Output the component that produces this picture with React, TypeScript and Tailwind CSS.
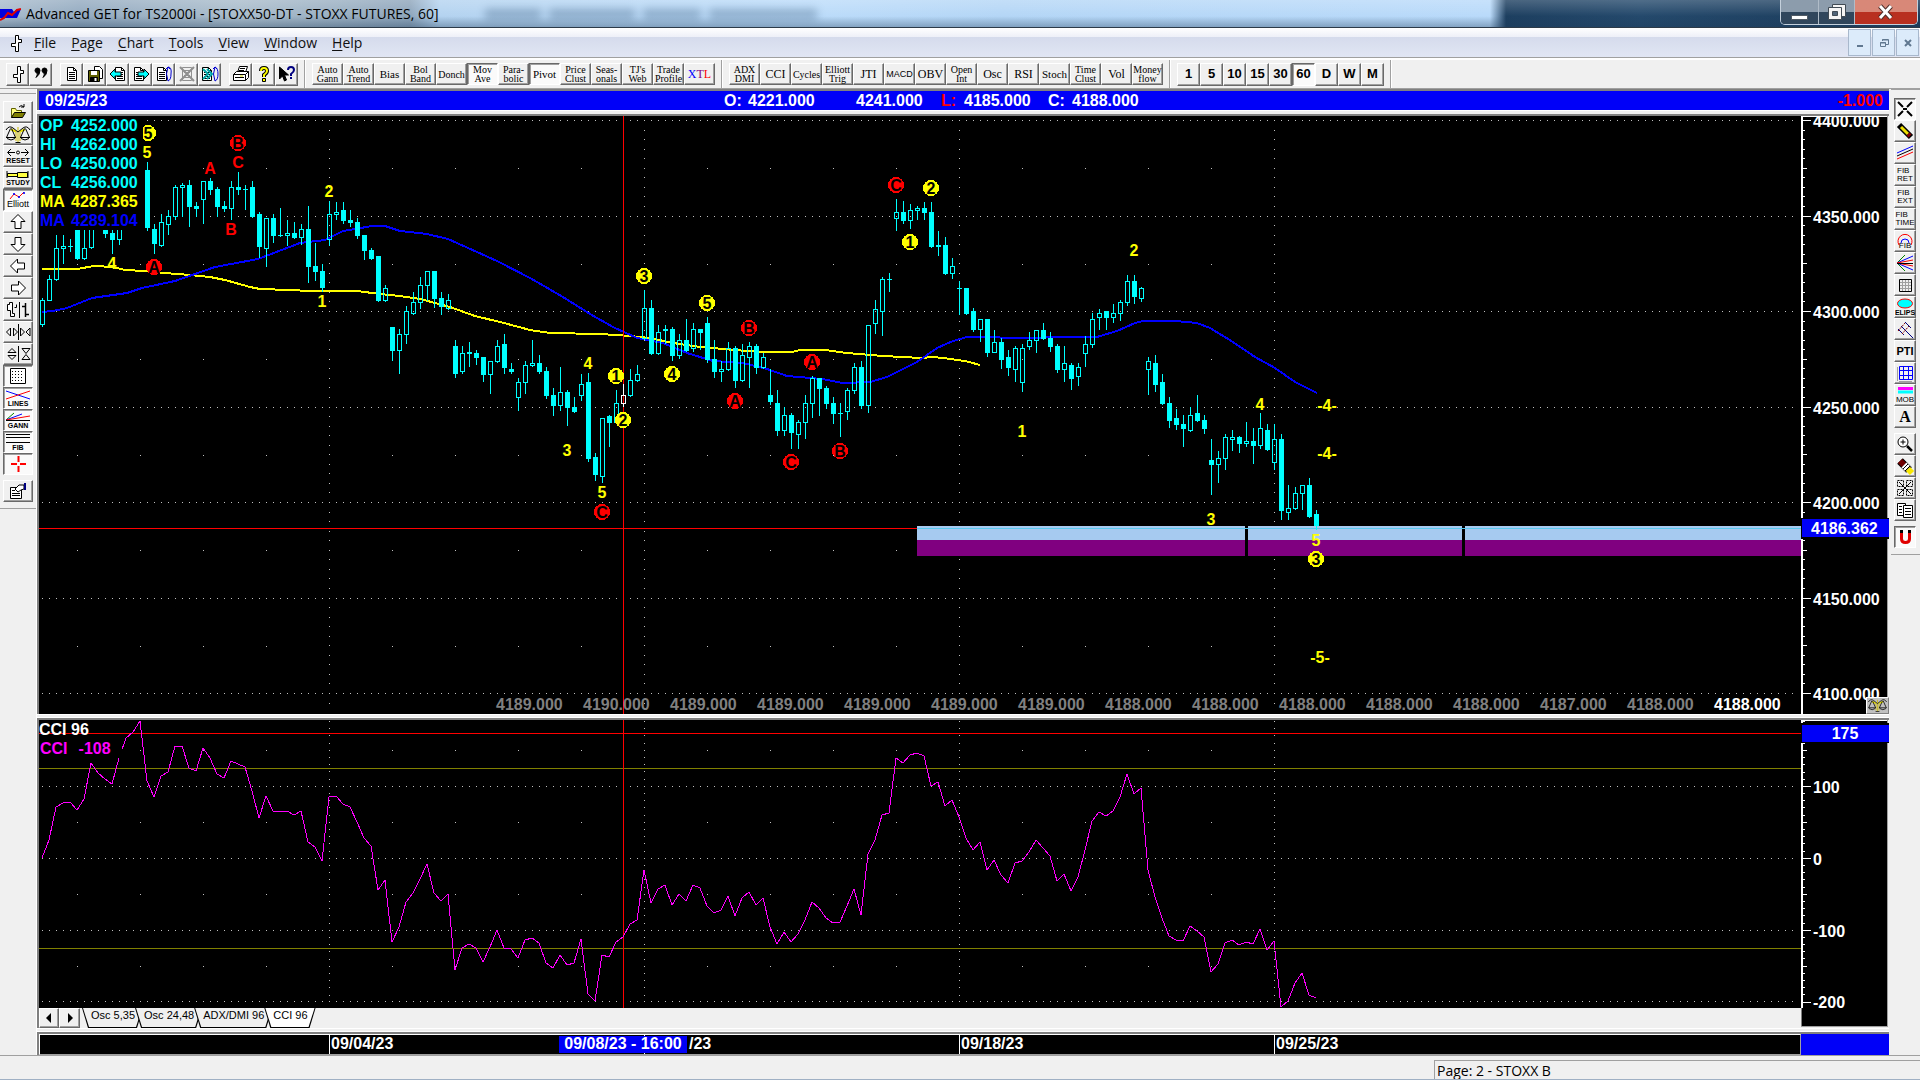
import { type ReactNode } from "react";
import clsx from "clsx";

// high, body top, body bottom, low, filled; one bar every 7px from x = 42
type Candle = [number, number, number, number, 0 | 1];

const FIRST_BAR = 42;
const BAR_STEP = 7;
const CURSOR_BAR = 83;

const CANDLES: Candle[] = [
  [298, 300, 325, 327, 0], [275, 279, 301, 301, 0], [235, 248, 280, 281, 0], [235, 246, 249, 264, 0],
  [239, 246, 246, 252, 0], [230, 230, 259, 260, 1], [230, 248, 259, 260, 0], [225, 225, 248, 249, 0],
  [210, 215, 225, 228, 1], [225, 225, 234, 238, 1], [230, 233, 240, 254, 1], [225, 225, 240, 245, 0],
  [200, 205, 215, 220, 0], [185, 190, 210, 215, 0], [165, 170, 190, 195, 0], [162, 170, 228, 231, 1],
  [224, 229, 244, 254, 1], [214, 222, 246, 247, 0], [210, 216, 225, 235, 0], [185, 187, 217, 220, 0],
  [183, 185, 188, 217, 0], [180, 185, 207, 227, 1], [202, 206, 209, 217, 1], [181, 181, 200, 224, 0],
  [178, 181, 190, 195, 1], [187, 189, 207, 217, 1], [201, 206, 209, 212, 1], [181, 187, 209, 220, 0],
  [172, 187, 190, 195, 1], [185, 189, 189, 210, 0], [181, 187, 217, 218, 1], [212, 214, 247, 258, 1],
  [218, 218, 249, 267, 0], [214, 218, 236, 243, 1], [208, 235, 235, 237, 0], [220, 233, 236, 246, 0],
  [222, 233, 238, 239, 1], [224, 229, 238, 245, 0], [206, 229, 267, 283, 1], [243, 266, 272, 281, 1],
  [264, 271, 288, 292, 1], [201, 214, 240, 246, 0], [202, 212, 215, 220, 0], [202, 210, 221, 224, 1],
  [210, 220, 223, 227, 1], [218, 222, 236, 239, 1], [235, 235, 251, 260, 1], [248, 250, 259, 260, 1],
  [256, 256, 301, 302, 1], [285, 288, 301, 302, 0], [327, 327, 351, 361, 1], [329, 334, 351, 374, 0],
  [306, 311, 335, 344, 0], [292, 302, 314, 315, 0], [277, 285, 303, 309, 0], [271, 271, 286, 301, 0],
  [271, 271, 299, 308, 1], [292, 298, 307, 315, 1], [294, 300, 309, 310, 0], [340, 346, 374, 378, 1],
  [346, 353, 372, 374, 0], [342, 352, 354, 367, 1], [350, 353, 358, 365, 1], [357, 357, 375, 382, 1],
  [361, 361, 375, 394, 0], [340, 346, 362, 363, 0], [334, 344, 368, 374, 1], [363, 369, 372, 374, 1],
  [378, 382, 398, 411, 0], [361, 365, 383, 394, 0], [340, 363, 366, 367, 0], [355, 363, 372, 374, 1],
  [367, 371, 396, 399, 1], [388, 395, 406, 416, 1], [367, 392, 406, 411, 0], [390, 392, 408, 426, 1],
  [397, 407, 412, 413, 1], [374, 384, 396, 401, 0], [373, 382, 459, 462, 1], [453, 457, 475, 481, 1],
  [418, 418, 477, 483, 0], [415, 416, 423, 447, 1], [390, 403, 423, 423, 0], [384, 395, 404, 407, 0],
  [369, 380, 396, 397, 0], [365, 374, 381, 382, 0], [290, 308, 339, 340, 0], [300, 308, 354, 355, 1],
  [325, 332, 354, 355, 0], [325, 329, 331, 344, 1], [327, 329, 356, 361, 1], [334, 340, 356, 359, 0],
  [319, 340, 351, 352, 1], [323, 329, 349, 352, 0], [329, 329, 333, 350, 1], [317, 323, 360, 363, 1],
  [340, 359, 372, 378, 1], [361, 369, 372, 382, 0], [342, 348, 370, 371, 0], [346, 348, 381, 388, 1],
  [344, 355, 381, 382, 0], [342, 346, 358, 388, 0], [344, 346, 368, 374, 1], [353, 357, 368, 369, 0],
  [369, 395, 402, 405, 1], [390, 403, 431, 436, 1], [407, 415, 431, 436, 0], [413, 415, 433, 449, 1],
  [420, 422, 435, 449, 0], [395, 403, 423, 439, 0], [376, 378, 404, 418, 0], [378, 378, 389, 416, 1],
  [386, 388, 404, 409, 1], [397, 403, 414, 424, 1], [403, 413, 413, 437, 0], [388, 390, 412, 420, 0],
  [363, 367, 391, 394, 0], [361, 367, 406, 409, 1], [325, 325, 406, 413, 0], [300, 309, 324, 334, 0],
  [277, 279, 312, 336, 0], [273, 279, 279, 292, 0], [199, 212, 219, 231, 0], [201, 212, 221, 224, 1],
  [204, 210, 221, 229, 0], [206, 208, 211, 220, 0], [202, 208, 213, 220, 1], [202, 212, 247, 248, 1],
  [231, 245, 247, 256, 1], [237, 245, 274, 275, 1], [258, 266, 274, 279, 0], [281, 288, 288, 315, 0],
  [288, 288, 314, 315, 1], [308, 311, 330, 332, 1], [319, 319, 330, 342, 0], [319, 319, 353, 357, 1],
  [330, 342, 353, 353, 0], [338, 342, 360, 369, 1], [350, 357, 368, 376, 1], [346, 348, 370, 382, 0],
  [344, 348, 383, 392, 0], [332, 340, 347, 350, 0], [330, 330, 341, 353, 0], [323, 330, 339, 340, 1],
  [332, 338, 347, 352, 1], [344, 346, 370, 373, 1], [346, 363, 370, 382, 0], [363, 365, 379, 390, 1],
  [363, 367, 377, 386, 0], [336, 344, 354, 367, 0], [313, 319, 345, 348, 0], [309, 313, 318, 330, 0],
  [311, 311, 318, 330, 1], [304, 313, 318, 323, 0], [300, 302, 314, 321, 0], [275, 281, 303, 306, 0],
  [275, 281, 297, 304, 1], [287, 288, 299, 302, 0], [357, 361, 370, 395, 0], [355, 363, 385, 392, 1],
  [374, 382, 404, 405, 1], [397, 403, 421, 428, 1], [409, 418, 425, 430, 1], [415, 424, 429, 447, 1],
  [407, 415, 431, 432, 0], [395, 413, 421, 422, 1], [415, 420, 429, 434, 1], [439, 460, 465, 495, 1],
  [451, 458, 465, 483, 0], [434, 437, 459, 470, 0], [430, 437, 440, 451, 0], [436, 437, 444, 453, 1],
  [422, 441, 444, 447, 0], [428, 441, 446, 464, 1], [413, 428, 446, 449, 0], [424, 430, 450, 451, 1],
  [424, 439, 463, 470, 0], [434, 439, 511, 520, 1], [485, 508, 513, 520, 0], [487, 493, 509, 510, 0],
  [485, 485, 494, 510, 0], [478, 485, 517, 518, 1], [510, 514, 526, 530, 1],
];

const CCI = [
  858, 840, 807, 803, 802, 810, 799, 763, 773, 779, 784, 758, 738, 732, 721, 781, 797, 776, 772, 746,
  746, 768, 771, 748, 758, 774, 778, 761, 764, 767, 791, 818, 796, 811, 811, 811, 815, 811, 842, 847,
  861, 797, 796, 804, 807, 822, 838, 846, 890, 880, 942, 927, 902, 893, 879, 864, 893, 901, 894, 970,
  948, 944, 948, 962, 947, 930, 948, 949, 958, 940, 938, 943, 963, 968, 955, 965, 963, 939, 994, 1001,
  955, 957, 942, 937, 924, 920, 870, 903, 889, 885, 905, 894, 901, 885, 888, 906, 913, 910, 896, 916,
  898, 892, 905, 898, 927, 944, 932, 942, 934, 920, 902, 908, 918, 923, 922, 906, 889, 915, 854, 840,
  815, 813, 758, 763, 755, 753, 756, 786, 782, 806, 800, 817, 838, 850, 842, 870, 860, 875, 883, 863,
  861, 852, 840, 848, 856, 881, 874, 891, 877, 850, 821, 812, 816, 811, 797, 774, 794, 788, 870, 897,
  918, 936, 940, 941, 926, 931, 937, 972, 964, 943, 940, 945, 942, 944, 929, 950, 941, 1007, 1001, 983,
  973, 995, 998,
];

const MA_YELLOW =
  "42,269 77,269 94,266 113,267 125,270 145,271 165,273 190,275 210,277 225,280 250,287 260,289 290,290 310,291 357,291 380,294 400,296 420,299 450,307 475,316 500,322 530,330 550,333 600,334 630,336 650,338 673,343 700,347 735,350 760,352 792,352 800,350 825,350 847,353 883,356 922,358 933,357 943,358 965,361 980,365";
const MA_BLUE =
  "42,312 53,311 67,308 92,298 127,293 142,288 175,281 215,267 258,259 300,243 325,240 343,231 355,229 372,226 385,226 400,231 427,234 448,239 477,252 497,261 530,278 563,297 590,314 613,327 637,338 663,343 687,353 713,361 743,363 767,369 787,376 822,379 843,383 870,382 887,377 917,362 937,348 953,341 967,337 993,337 1007,338 1040,338 1050,337 1070,337 1097,337 1117,331 1135,323 1143,321 1175,321 1197,323 1210,328 1233,342 1255,357 1275,368 1295,382 1317,393";

// text, centre x, centre y, colour, drawn on a disc
type Wave = [string, number, number, "y" | "r", 0 | 1];

const WAVES: Wave[] = [
  ["5", 148, 133, "y", 1], ["5", 147, 152, "y", 0], ["4", 112, 263, "y", 0], ["A", 154, 267, "r", 1],
  ["A", 210, 168, "r", 0], ["B", 238, 143, "r", 1], ["C", 238, 162, "r", 0], ["B", 231, 229, "r", 0],
  ["2", 329, 191, "y", 0], ["1", 322, 301, "y", 0], ["4", 588, 363, "y", 0], ["1", 616, 376, "y", 1],
  ["2", 623, 420, "y", 1], ["3", 567, 450, "y", 0], ["5", 602, 492, "y", 0], ["C", 602, 512, "r", 1],
  ["3", 644, 276, "y", 1], ["5", 707, 303, "y", 1], ["4", 672, 374, "y", 1], ["B", 749, 328, "r", 1],
  ["A", 735, 401, "r", 1], ["A", 812, 362, "r", 1], ["C", 791, 462, "r", 1], ["B", 840, 451, "r", 1],
  ["C", 896, 185, "r", 1], ["2", 931, 188, "y", 1], ["1", 910, 242, "y", 1], ["1", 1022, 431, "y", 0],
  ["2", 1134, 250, "y", 0], ["3", 1211, 519, "y", 0], ["4", 1260, 404, "y", 0], ["-4-", 1327, 405, "y", 0],
  ["-4-", 1327, 453, "y", 0], ["5", 1316, 540, "y", 0], ["3", 1316, 559, "y", 1], ["-5-", 1320, 657, "y", 0],
];

const PRICE_LEVELS: [string, number][] = [
  ["4400.000", 120], ["4350.000", 216], ["4300.000", 311], ["4250.000", 407],
  ["4200.000", 502], ["4150.000", 598], ["4100.000", 693],
];
const CCI_LEVELS: [string, number][] = [["100", 786], ["0", 858], ["-100", 930], ["-200", 1001]];

const DAY_LINES = [329, 644, 959, 1274];
const HALF_MARKS = [
  77, 140, 203, 266, 392, 455, 518, 581, 707, 770, 833, 896, 1022, 1085, 1148, 1211,
];

const LAST_PRICES = [
  "4189.000", "4190.000", "4189.000", "4189.000", "4189.000", "4189.000", "4189.000", "4188.000",
  "4188.000", "4188.000", "4188.000", "4188.000", "4187.000", "4188.000", "4188.000",
];

const barX = (i: number) => FIRST_BAR + i * BAR_STEP;

function steps(from: number, to: number, step: number) {
  const out: number[] = [];
  for (let v = from; v < to; v += step) out.push(Math.round(v));
  return out;
}

function Grid({ levels, halves, dots }: { levels: number[]; halves: number[]; dots: number[] }) {
  return (
    <g>
      {levels.map((y) => (
        <line key={y} x1={FIRST_BAR} x2={1793} y1={y + 0.5} y2={y + 0.5} stroke="#c0c0c0" strokeDasharray="1 6" />
      ))}
      {DAY_LINES.map((x) =>
        dots.map((y) => <rect key={`${x}-${y}`} x={x} y={y} width="1" height="1" fill="#c0c0c0" />),
      )}
      {HALF_MARKS.map((x) =>
        halves.map((y) => <rect key={`${x}-${y}`} x={x} y={y} width="1" height="1" fill="#c0c0c0" />),
      )}
    </g>
  );
}

function CandleBar({ index, candle }: { index: number; candle: Candle }) {
  const [high, top, bottom, low, filled] = candle;
  const x = barX(index);
  const color = index === CURSOR_BAR ? "#ffffff" : "#00ffff";
  if (top === bottom) {
    return (
      <g fill={color}>
        <rect x={x} y={high} width="1" height={low - high} />
        <rect x={x - 2} y={top} width="5" height="1" />
      </g>
    );
  }
  return (
    <g fill={color}>
      <rect x={x} y={high} width="1" height={Math.max(top - high, 0)} />
      <rect x={x} y={bottom} width="1" height={Math.max(low - bottom, 0)} />
      {filled ? (
        <rect x={x - 2} y={top} width="5" height={bottom - top} />
      ) : (
        <rect x={x - 1.5} y={top + 0.5} width="4" height={bottom - top - 1} fill="none" stroke={color} />
      )}
    </g>
  );
}

function WaveLabel({ wave }: { wave: Wave }) {
  const [text, x, y, tone, disc] = wave;
  const color = tone === "y" ? "#ffff00" : "#ff0000";
  return (
    <g>
      {disc ? <circle cx={x} cy={y} r="8" fill={color} shapeRendering="crispEdges" /> : null}
      <text x={x} y={y + 6} textAnchor="middle" fill={disc ? "#000000" : color}>
        {text}
      </text>
    </g>
  );
}

function PriceChart() {
  return (
    <div className="relative h-[598px] min-w-0 flex-1 overflow-hidden bg-black">
      <svg className="block size-full text-[16px] font-bold" role="img" aria-label="STOXX futures, 60 minute candles">
        <g transform="translate(-39 -116)">
          <g shapeRendering="crispEdges">
            <Grid
              levels={PRICE_LEVELS.map(([, y]) => y)}
              halves={[168, 264, 359, 455, 550, 646]}
              dots={steps(120, 712, 9.55)}
            />
            <rect x="917" y="526" width="1600" height="14" fill="#a6caf0" />
            <rect x="917" y="540" width="1600" height="16" fill="#800080" />
            <rect x="1245" y="526" width="3" height="30" fill="#000" />
            <rect x="1462" y="526" width="3" height="30" fill="#000" />
            <rect x="39" y="528" width="878" height="1" fill="#ff0000" />
            <rect x="917" y="528" width="1600" height="1" fill="#59c8f0" />
            <polyline points={MA_YELLOW} fill="none" stroke="#ffff00" strokeWidth="2" />
            <polyline points={MA_BLUE} fill="none" stroke="#0000ff" strokeWidth="2" />
            <rect x={barX(CURSOR_BAR)} y="116" width="1" height="600" fill="#ff0000" />
            {CANDLES.map((candle, i) => (
              <CandleBar key={i} index={i} candle={candle} />
            ))}
          </g>
          {WAVES.map((wave, i) => (
            <WaveLabel key={i} wave={wave} />
          ))}
        </g>
      </svg>
      <Readout />
      <div className="absolute right-[20px] bottom-0 flex gap-5 text-[16px] leading-[19px] font-bold text-[#808080]">
        {LAST_PRICES.map((price, i) => (
          <span key={i} className={clsx("w-[67px]", i === LAST_PRICES.length - 1 && "text-white")}>
            {price}
          </span>
        ))}
      </div>
    </div>
  );
}

const READOUT = [
  { label: "OP", value: "4252.000", tone: "text-[#00ffff]" },
  { label: "HI", value: "4262.000", tone: "text-[#00ffff]" },
  { label: "LO", value: "4250.000", tone: "text-[#00ffff]" },
  { label: "CL", value: "4256.000", tone: "text-[#00ffff]" },
  { label: "MA", value: "4287.365", tone: "text-[#ffff00]" },
  { label: "MA", value: "4289.104", tone: "text-[#0000ff]" },
];

function Readout() {
  return (
    <dl className="absolute top-0 left-0 w-[104px] bg-black pl-px text-[16px] leading-[19px] font-bold">
      {READOUT.map((row, i) => (
        <div key={i} className={clsx("flex", row.tone)}>
          <dt className="w-[31px]">{row.label}</dt>
          <dd>{row.value}</dd>
        </div>
      ))}
    </dl>
  );
}

function CciChart() {
  const points = CCI.map((y, i) => `${barX(i)},${y}`).join(" ");
  return (
    <div className="relative h-[288px] overflow-hidden bg-black">
      <svg className="block size-full" role="img" aria-label="CCI 96">
        <g transform="translate(-39 -720)" shapeRendering="crispEdges">
          <Grid levels={CCI_LEVELS.map(([, y]) => y)} halves={[750, 822, 894, 966]} dots={steps(721, 1000, 7.2)} />
          <rect x="39" y="733" width="3000" height="1" fill="#ff0000" />
          <rect x="39" y="768" width="3000" height="1" fill="#808000" />
          <rect x="39" y="948" width="3000" height="1" fill="#808000" />
          <rect x={barX(CURSOR_BAR)} y="720" width="1" height="290" fill="#ff0000" />
          <polyline points={points} fill="none" stroke="#ff00ff" />
        </g>
      </svg>
      <div className="absolute top-0 left-0 text-[16px] leading-[19px] font-bold">
        <p className="text-white">CCI 96</p>
        <p className="flex w-[83px] gap-[11px] bg-black pl-px text-[#ff00ff]">
          <span>CCI</span>
          <span>-108</span>
        </p>
      </div>
    </div>
  );
}

function PriceAxis() {
  return (
    <div className="relative h-[598px] w-[88px] shrink-0 overflow-hidden bg-black">
      <svg className="block size-full text-[16px] font-bold" aria-label="Price scale">
        <g transform="translate(-1801 -116)" fill="#ffffff">
          <g shapeRendering="crispEdges">
            <rect x="1801" y="116" width="2" height="598" />
            <rect x="1801" y="116" width="86" height="1" />
            <rect x="1887" y="116" width="1" height="598" fill="#a0a0a0" />
            <rect x="1888" y="116" width="1" height="598" fill="#f0f0f0" />
            {steps(120, 700, 9.55).map((y, i) => (
              <rect key={y} x="1803" y={y} width={i % 10 === 0 ? 8 : i % 5 === 0 ? 4 : 2} height="1" />
            ))}
          </g>
          {PRICE_LEVELS.map(([label, y]) => (
            <text key={label} x="1813" y={y + 7}>
              {label}
            </text>
          ))}
          <rect x="1801" y="518" width="88" height="21" fill="#000" />
          <rect x="1802" y="519" width="87" height="18" fill="#0000f8" />
          <text x="1811" y="534">
            4186.362
          </text>
        </g>
      </svg>
      <button
        type="button"
        aria-label="Scale"
        className="absolute right-0 bottom-0 flex h-[17px] w-[23px] items-center justify-center border border-white border-r-[#808080] border-b-[#808080] bg-[#c0c0c0]"
      >
        <ScalesIcon small />
      </button>
    </div>
  );
}

function CciAxis() {
  return (
    <div className="h-[308px] w-[88px] shrink-0 bg-[#f0f0f0]">
      <svg className="block size-full text-[16px] font-bold" aria-label="CCI scale">
        <g transform="translate(-1801 -720)" fill="#ffffff">
          <g shapeRendering="crispEdges">
            <rect x="1801" y="720" width="87" height="306" fill="#000" />
            <rect x="1801" y="720" width="2" height="288" />
            <rect x="1803" y="720" width="84" height="1" />
            <rect x="1801" y="1008" width="1" height="18" fill="#808080" />
            <rect x="1887" y="720" width="1" height="306" fill="#a0a0a0" />
            <rect x="1801" y="1026" width="87" height="1" fill="#a0a0a0" />
            {steps(714, 1004, 7.19).map((y, i) => (
              <rect key={y} x="1803" y={y} width={i % 10 === 0 ? 8 : i % 5 === 0 ? 4 : 2} height="1" />
            ))}
          </g>
          {CCI_LEVELS.map(([label, y]) => (
            <text key={label} x="1813" y={y + 7}>
              {label}
            </text>
          ))}
          <rect x="1801" y="723" width="88" height="20" fill="#000" />
          <rect x="1802" y="725" width="87" height="17" fill="#0000f8" />
          <text x="1845" y="739" textAnchor="middle">
            175
          </text>
        </g>
      </svg>
    </div>
  );
}

// the cursor's time box covers the start of the second date
const DATE_LABELS: [string, number][] = [
  ["09/04/23", 331], ["/23", 689], ["09/18/23", 961], ["09/25/23", 1276],
];

function DateAxis() {
  return (
    <div className="flex h-[21px]">
      <div className="min-w-0 flex-1 border border-white border-b-[#a0a0a0] border-r-[#a0a0a0] bg-black">
        <svg className="block size-full text-[16px] font-bold" aria-label="Dates">
          <g transform="translate(-40 0)" fill="#ffffff">
            {DAY_LINES.map((x) => (
              <rect key={x} x={x} y="0" width="1" height="20" shapeRendering="crispEdges" />
            ))}
            {DATE_LABELS.map(([date, x]) => (
              <text key={date} x={x} y="14">
                {date}
              </text>
            ))}
            <rect x="559" y="1" width="128" height="17" fill="#0000f8" />
            <text x="623" y="14" textAnchor="middle">
              09/08/23 - 16:00
            </text>
          </g>
        </svg>
      </div>
      <div className="w-[88px] shrink-0 bg-[#0000f8]" />
    </div>
  );
}

function ToolButton({
  label,
  pressed,
  className,
  children,
}: {
  label: string;
  pressed?: boolean;
  className?: string;
  children: ReactNode;
}) {
  return (
    <button
      type="button"
      aria-label={label}
      aria-pressed={pressed}
      className={clsx(
        "flex shrink-0 flex-col items-center justify-center overflow-hidden border",
        pressed
          ? "border-t-[#696969] border-r-white border-b-white border-l-[#696969] bg-[#fafafa] shadow-[inset_1px_1px_0_#a0a0a0]"
          : "border-t-white border-r-[#696969] border-b-[#696969] border-l-white bg-[#f0f0f0] shadow-[inset_-1px_-1px_0_#a0a0a0]",
        className,
      )}
    >
      {children}
    </button>
  );
}

function Icon({ w = 20, h = 20, children }: { w?: number; h?: number; children: ReactNode }) {
  return (
    <svg
      width={w}
      height={h}
      viewBox={`0 0 ${w} ${h}`}
      fill="none"
      stroke="#000"
      className="block shrink-0"
      aria-hidden="true"
    >
      {children}
    </svg>
  );
}

function ScalesIcon({ small }: { small?: boolean }) {
  return (
    <svg
      width={small ? 21 : 26}
      height={small ? 13 : 17}
      viewBox="0 0 26 17"
      fill="none"
      stroke="#000"
      aria-hidden="true"
      className="block"
    >
      <path d="M13 1v15M11 5v10M15 5v10" stroke="#c8b800" />
      <path d="M6 3.500l5 2M20 3.500l-5 2" stroke="#e8e000" strokeWidth="2" />
      <path d="M10.500 16.500h5M1 4q3-5 7-2l5 4 5-4q4-3 7 2" />
      <path d="M5.500 2.500L1.500 11.500M6.500 2.500l4 9M19.500 2.500l-4 9M20.500 2.500l4 9M1 11.500h10M15 11.500h10" />
      <path d="M2 12.500q4 3 8 0M16 12.500q4 3 8 0" />
    </svg>
  );
}

function CrossBarIcon() {
  return (
    <Icon>
      <path d="M9.500 2.500h3v4h3v3h-3v9h-3v-5h-4v-3h4z" fill="#fff" />
    </Icon>
  );
}

function PageShape({ x = 5 }: { x?: number }) {
  return (
    <g transform={`translate(${x} 0)`}>
      <path d="M.5 3.500h6l3 3v10h-9z" fill="#fff" />
      <path d="M6.500 3.500v3h3M2 8.500h6M2 10.500h6M2 12.500h6M2 14.500h6" />
    </g>
  );
}

const MAIN_TOOLS: { label: string; icon: ReactNode; gap?: boolean }[] = [
  { label: "Open chart", icon: <CrossBarIcon /> },
  {
    label: "Quote",
    icon: (
      <Icon>
        <path
          d="M4 6.500a2.500 2.500 0 1 1 5 0q0 4-4 7q2-3 1-4.500q-2-.5-2-2.500zM11 6.500a2.500 2.500 0 1 1 5 0q0 4-4 7q2-3 1-4.500q-2-.5-2-2.500z"
          fill="#000"
        />
      </Icon>
    ),
  },
  { label: "New page", gap: true, icon: <Icon><PageShape /></Icon> },
  {
    label: "Save page",
    icon: (
      <Icon>
        <path d="M9.500 2.500h5l3 3v9h-8z" fill="#fff" />
        <path d="M3.500 6.500h11v11h-11z" fill="#606000" />
        <path d="M6 7h6v4H6z" fill="#fff" stroke="none" />
        <path d="M5.500 13.500h7v4h-7z" fill="#000" />
        <path d="M10.500 14v3" stroke="#fff" strokeWidth="2" />
      </Icon>
    ),
  },
  {
    label: "Previous page",
    icon: (
      <Icon>
        <PageShape x={7} />
        <path d="M2 10l5-5v3h6v4H7v3z" fill="#00ffff" />
      </Icon>
    ),
  },
  {
    label: "Next page",
    icon: (
      <Icon>
        <PageShape x={3} />
        <path d="M18 10l-5-5v3H7v4h6v3z" fill="#00ffff" />
      </Icon>
    ),
  },
  {
    label: "Page forward",
    icon: (
      <Icon>
        <PageShape x={3} />
        <path d="M14 3q-3 7 0 14M14 3q4 0 3 7q0 6-3 7M12 5l2-2 2 2" stroke="#0000d0" />
      </Icon>
    ),
  },
  {
    label: "Delete page",
    icon: (
      <Icon>
        <g stroke="#909090">
          <path d="M5.500 3.500h9v13h-9zM7 6.500h6M7 8.500h6M7 11.500h6M7 13.500h6" />
          <path d="M3 3l14 14M17 3L3 17" strokeWidth="2" />
        </g>
      </Icon>
    ),
  },
  {
    label: "Cycle pages",
    icon: (
      <Icon>
        <PageShape x={2} />
        <path d="M3 5l5 5-5 5M7 5l5 5-5 5" stroke="#00a8a8" strokeWidth="2" />
        <path d="M15 3q-3 7 0 14M15 3q3 1 3 7q0 6-3 7M13 5l2-2 2 2" stroke="#0000d0" />
      </Icon>
    ),
  },
  {
    label: "Print",
    gap: true,
    icon: (
      <Icon>
        <path d="M6.500 8.500l2-6h8l-2 6z" fill="#fff" />
        <path d="M2.500 10.500l3-3h12v6l-3 3h-12z" fill="#fff" />
        <path d="M2.500 10.500h12v6M14.500 10.500l3-3M9 4.500h5M8 6.500h5M4 13.500h9" />
        <path d="M9 12h3" stroke="#d8d800" />
      </Icon>
    ),
  },
  {
    label: "Help",
    icon: (
      <Icon>
        <path d="M7 7q0-3 3-3t3 3q0 2-3 4v2" strokeWidth="4" />
        <path d="M7 7q0-3 3-3t3 3q0 2-3 4v2" stroke="#ffff00" strokeWidth="2" />
        <path d="M8.500 14.500h3v3h-3z" fill="#ffff00" />
      </Icon>
    ),
  },
  {
    label: "Context help",
    icon: (
      <Icon>
        <path d="M2.500 3v12l3-3 2 5 2-1-2-5h4z" fill="#000" />
        <path d="M11 6q0-3 3-3t3 3q0 2-3 4v2M14 13v2" stroke="#000080" strokeWidth="2" />
      </Icon>
    ),
  },
];

type TextTool = { lines: string[]; pressed?: boolean; size?: "sm" | "md" | "lg" };

const STUDY_TOOLS: TextTool[] = [
  { lines: ["Auto", "Gann"] },
  { lines: ["Auto", "Trend"] },
  { lines: ["Bias"], size: "md" },
  { lines: ["Bol", "Band"] },
  { lines: ["Donch"] },
  { lines: ["Mov", "Ave"], pressed: true },
  { lines: ["Para-", "bolic"] },
  { lines: ["Pivot"], pressed: true, size: "md" },
  { lines: ["Price", "Clust"] },
  { lines: ["Seas-", "onals"] },
  { lines: ["TJ's", "Web"] },
  { lines: ["Trade", "Profile"] },
  { lines: ["XTL"], size: "lg" },
];

const OSC_TOOLS: TextTool[] = [
  { lines: ["ADX", "DMI"] },
  { lines: ["CCI"], size: "lg" },
  { lines: ["Cycles"] },
  { lines: ["Elliott", "Trig"] },
  { lines: ["JTI"], size: "lg" },
  { lines: ["MACD"] },
  { lines: ["OBV"], size: "lg" },
  { lines: ["Open", "Int"] },
  { lines: ["Osc"], size: "lg" },
  { lines: ["RSI"], size: "lg" },
  { lines: ["Stoch"], size: "md" },
  { lines: ["Time", "Clust"] },
  { lines: ["Vol"], size: "lg" },
  { lines: ["Money", "flow"] },
];

const INTERVALS = ["1", "5", "10", "15", "30", "60", "D", "W", "M"];

const TEXT_TOOL_SIZES = {
  sm: "text-[10px] leading-[9px]",
  md: "text-[11px] leading-[12px]",
  lg: "text-[12px] leading-[14px]",
};

function TextToolButton({ tool }: { tool: TextTool }) {
  const text = tool.lines.join(" ");
  return (
    <ToolButton
      label={text}
      pressed={tool.pressed}
      className={clsx(
        "h-[22px] w-[31px] font-['Liberation_Serif',serif] whitespace-nowrap",
        TEXT_TOOL_SIZES[tool.size ?? "sm"],
      )}
    >
      {text === "XTL" ? (
        <span>
          <span className="text-[#0000ff]">X</span>
          <span className="text-[#800080]">T</span>
          <span className="text-[#ff0000]">L</span>
        </span>
      ) : text === "MACD" ? (
        <span className="font-['Liberation_Sans',sans-serif] text-[9px]">MACD</span>
      ) : (
        tool.lines.map((line) => <span key={line}>{line}</span>)
      )}
    </ToolButton>
  );
}

function ToolbarDivider() {
  return <div className="mx-[6px] h-full w-[2px] shrink-0 border-l border-[#a0a0a0] bg-white" />;
}

function Toolbar() {
  return (
    <div className="flex h-[29px] items-center border-t border-white pl-[6px]">
      {MAIN_TOOLS.map((tool) => (
        <ToolButton key={tool.label} label={tool.label} className={clsx("h-[23px] w-[23px]", tool.gap && "ml-2")}>
          {tool.icon}
        </ToolButton>
      ))}
      <ToolbarDivider />
      {STUDY_TOOLS.map((tool) => (
        <TextToolButton key={tool.lines.join(" ")} tool={tool} />
      ))}
      <ToolbarDivider />
      {OSC_TOOLS.map((tool) => (
        <TextToolButton key={tool.lines.join(" ")} tool={tool} />
      ))}
      <ToolbarDivider />
      {INTERVALS.map((interval) => (
        <ToolButton
          key={interval}
          label={interval}
          pressed={interval === "60"}
          className="h-[23px] w-[23px] text-[13px] leading-[16px] font-bold"
        >
          {interval}
        </ToolButton>
      ))}
      <ToolbarDivider />
    </div>
  );
}

function TinyLabel({ children }: { children: ReactNode }) {
  return <span className="text-[7px] leading-[7px] font-bold">{children}</span>;
}

const LEFT_TOOLS: { label: string; pressed?: boolean; gap?: boolean; icon: ReactNode }[] = [
  {
    label: "Open",
    icon: (
      <Icon>
        <path d="M3.500 15.500v-9h4l1 2h5v2" fill="#ffff80" stroke="#606000" />
        <path d="M3.500 15.500l3-5h11l-3 5z" fill="#808000" />
        <path d="M11 5q2-3 5 0M16 2v3h-3" />
      </Icon>
    ),
  },
  { label: "Scale", icon: <ScalesIcon /> },
  {
    label: "Reset",
    icon: (
      <>
        <Icon w={24} h={9}>
          <path d="M5 1L1.500 4.500 5 8M2 4.500h7M19 1l3.500 3.500L19 8M22 4.500h-7" />
          <circle cx="12" cy="4.500" r="1.500" />
        </Icon>
        <TinyLabel>RESET</TinyLabel>
      </>
    ),
  },
  {
    label: "Study",
    icon: (
      <>
        <Icon w={24} h={9}>
          <path d="M1.500 3.500h10v3h-10zM11.500 2.500h10v5h-10z" fill="#ffff40" />
          <path d="M1 1v7M22 1v7" />
        </Icon>
        <TinyLabel>STUDY</TinyLabel>
      </>
    ),
  },
  {
    label: "Elliott",
    pressed: true,
    icon: (
      <>
        <Icon w={24} h={9}>
          <path d="M4 8l4-5 5 3 5-5" stroke="#ff0000" />
          <path d="M7.500 2.500h1v1h-1zM12.500 5.500h1v1h-1zM17.500 1.500h1v1h-1z" fill="#0000ff" stroke="#0000ff" />
        </Icon>
        <span className="text-[9px] leading-[9px]">Elliott</span>
      </>
    ),
  },
  { label: "Up", icon: <Icon><path d="M10 2.500l7 7h-4v7H7v-7H3z" fill="#fff" /></Icon> },
  { label: "Down", icon: <Icon><path d="M10 17.500l7-7h-4v-7H7v7H3z" fill="#fff" /></Icon> },
  { label: "Left", icon: <Icon><path d="M2.500 10l7-7v4h7v6h-7v4z" fill="#fff" /></Icon> },
  { label: "Right", icon: <Icon><path d="M17.500 10l-7-7v4h-7v6h7v4z" fill="#fff" /></Icon> },
  {
    label: "Bar width",
    icon: (
      <Icon w={26}>
        <path d="M2.500 4.500h2v-2h3v11h2v3h-4v-6h-3zM9.500 7.500h2v-3M14.500 2v16" fill="#fff" />
        <path d="M20.500 3v14M17 6.500h3M21 14.500h3" strokeWidth="1.500" />
      </Icon>
    ),
  },
  {
    label: "Spread",
    icon: (
      <Icon w={26}>
        <path d="M5.500 6v8l-4-4zM8.500 6v8l4-4z" />
        <path d="M13.500 2v16" />
        <path d="M15.500 6v8l4-4zM25 6v8l-4-4z" />
      </Icon>
    ),
  },
  {
    label: "Stretch",
    icon: (
      <Icon w={26}>
        <path d="M3 8.500h8l-4-4zM3 11.500h8l-4 4z" />
        <path d="M13.500 2v16" />
        <path d="M17 4.500h8l-4 5zM17 15.500h8l-4-5z" />
      </Icon>
    ),
  },
  {
    label: "Grid",
    pressed: true,
    icon: (
      <Icon>
        <path d="M2.500 2.500h15v15h-15z" fill="#fff" />
        <path d="M4 5.500h12M4 8.500h12M4 11.500h12M4 14.500h12" strokeDasharray="1 2" />
      </Icon>
    ),
  },
  {
    label: "Lines",
    pressed: true,
    icon: (
      <>
        <Icon w={26} h={10}>
          <path d="M1 1l24 8" stroke="#0000ff" />
          <path d="M1 9l24-8" stroke="#ff0000" />
        </Icon>
        <TinyLabel>LINES</TinyLabel>
      </>
    ),
  },
  {
    label: "Gann",
    pressed: true,
    icon: (
      <>
        <Icon w={26} h={10}>
          <path d="M1 8l8-7" stroke="#008000" />
          <path d="M1 8l16-6" stroke="#0000ff" />
          <path d="M1 8l24-4" stroke="#ff0000" />
          <path d="M1 8.500h24" />
        </Icon>
        <TinyLabel>GANN</TinyLabel>
      </>
    ),
  },
  {
    label: "Fibonacci",
    pressed: true,
    icon: (
      <>
        <Icon w={26} h={11}>
          <path d="M1 1.500h24M1 4.500h24M1 9.500h24" />
        </Icon>
        <TinyLabel>FIB</TinyLabel>
      </>
    ),
  },
  {
    label: "Crosshair",
    pressed: true,
    icon: <Icon><path d="M3 10h6M12 10h6M10.500 2v6M10.500 12v6" stroke="#ff0000" strokeWidth="2" /></Icon>,
  },
  {
    label: "Properties",
    gap: true,
    icon: (
      <Icon>
        <path d="M2.500 6.500h11v11h-11z" fill="#fff" />
        <path d="M4 9.500h3M4 12.500h8M4 14.500h8M7 8l4-4h5v4l-3 1-3 2z" fill="#fff" />
        <path d="M17 2v7" stroke="#000080" strokeWidth="2" />
      </Icon>
    ),
  },
];

function FibText({ second }: { second: string }) {
  return (
    <span className="flex flex-col items-start text-[8px] leading-[8px]">
      <span>FIB</span>
      <span>{second}</span>
    </span>
  );
}

const RIGHT_TOOLS: { label: string; pressed?: boolean; gap?: boolean; icon: ReactNode }[] = [
  {
    label: "Pointer",
    pressed: true,
    icon: <Icon><path d="M3 3l5 5M17 3l-5 5M3 17l5-5M17 17l-5-5M8 10h4" strokeWidth="2" /></Icon>,
  },
  {
    label: "Pencil",
    icon: (
      <Icon>
        <path d="M4 4l12 12" strokeWidth="6" />
        <path d="M6 6l7 7" stroke="#f0e000" strokeWidth="3" />
        <path d="M13 13l2 2" stroke="#800000" strokeWidth="4" />
      </Icon>
    ),
  },
  {
    label: "Channel",
    icon: (
      <Icon>
        <path d="M2 10l16-7" stroke="#0000ff" />
        <path d="M2 13l16-7" />
        <path d="M2 16l16-7" stroke="#ff0000" />
      </Icon>
    ),
  },
  { label: "Fibonacci retracement", icon: <FibText second="RET" /> },
  { label: "Fibonacci extension", icon: <FibText second="EXT" /> },
  { label: "Fibonacci time", icon: <FibText second="TIME" /> },
  {
    label: "Fibonacci arcs",
    icon: (
      <Icon>
        <path d="M4 14a7 7 0 1 1 12 0" stroke="#ff0000" />
        <path d="M6 12a4 4 0 1 1 8 0" stroke="#0000ff" />
        <text x="10" y="17" textAnchor="middle" fill="#000" stroke="none" fontSize="8">
          FIB
        </text>
      </Icon>
    ),
  },
  {
    label: "Gann fan",
    icon: (
      <Icon>
        <path d="M2 10l8-8M2 10l8 8" stroke="#008000" />
        <path d="M2 10l16-7M2 10l16 7" stroke="#0000ff" />
        <path d="M2 10l16-3M2 10l16 3" stroke="#ff0000" />
        <path d="M2 10.500h16" />
      </Icon>
    ),
  },
  {
    label: "Gann box",
    icon: (
      <Icon>
        <path d="M4.500 4.500h12v12h-12z" />
        <path d="M7.500 5v11M10.500 5v11M13.500 5v11M5 7.500h11M5 10.500h11M5 13.500h11" stroke="#a0a0a0" />
      </Icon>
    ),
  },
  {
    label: "Ellipse",
    icon: (
      <>
        <Icon h={11}>
          <ellipse cx="10" cy="5.500" rx="7.500" ry="4.500" fill="#00ffff" stroke="#ff0000" />
        </Icon>
        <TinyLabel>ELIPS</TinyLabel>
      </>
    ),
  },
  {
    label: "Pitchfork",
    icon: (
      <Icon>
        <path d="M3 10l6 6M6 7l12 12M10 3l6 6" stroke="#000080" />
        <path d="M3 12l7-8M7 15l7-8" stroke="#800000" strokeDasharray="2 1" />
      </Icon>
    ),
  },
  { label: "PTI", icon: <span className="text-[11px] leading-[12px] font-bold">PTI</span> },
  {
    label: "Square grid",
    icon: (
      <Icon>
        <path d="M4.500 3.500h13v13h-13zM8.500 3.500v13M13.500 3.500v13M4.500 7.500h13M4.500 12.500h13" stroke="#0000ff" />
        <path d="M2.500 4v14M4 18.500h13" stroke="#a0a0a0" />
      </Icon>
    ),
  },
  {
    label: "Make or break",
    icon: (
      <>
        <Icon h={9}>
          <path d="M3 2.500h15" stroke="#ff00ff" strokeWidth="3" />
          <path d="M3 6h15" stroke="#00ffff" strokeWidth="3" />
        </Icon>
        <span className="text-[8px] leading-[9px]">MOB</span>
      </>
    ),
  },
  {
    label: "Text",
    icon: <span className="font-['Liberation_Serif',serif] text-[16px] leading-[16px] font-bold">A</span>,
  },
  {
    label: "Zoom",
    gap: true,
    icon: (
      <Icon>
        <circle cx="8" cy="8" r="5" fill="#fff" />
        <path d="M5.500 8h5M8 5.500v5" />
        <path d="M12 12l5 5" strokeWidth="2.500" />
      </Icon>
    ),
  },
  {
    label: "Erase",
    icon: (
      <Icon>
        <path d="M5 5l9 9" strokeWidth="8" />
        <path d="M5 5l4 4" stroke="#700000" strokeWidth="6" />
        <path d="M9 9l4 4" stroke="#fff" strokeWidth="7" />
        <path d="M8 13l5-5M10 15l5-5" />
        <path d="M13 13l4 4" stroke="#f8e800" strokeWidth="6" />
      </Icon>
    ),
  },
  {
    label: "Fit",
    icon: (
      <Icon>
        <path d="M2.500 2.500h6v6h-6zM11.500 2.500h6v6h-6zM2.500 11.500h6v6h-6zM11.500 11.500h6v6h-6z" strokeDasharray="2 1" />
        <path d="M4 4l12 12M16 4L4 16" />
      </Icon>
    ),
  },
  {
    label: "Copy",
    icon: (
      <Icon>
        <path d="M2.500 3.500h8v12h-8z" fill="#fff" />
        <path d="M8.500 5.500h9v12h-9z" fill="#fff" />
        <path d="M4 6.500h3M4 9.500h3M4 12.500h3M10 8.500h6M10 11.500h6M10 14.500h6" />
      </Icon>
    ),
  },
  {
    label: "Magnet",
    pressed: true,
    gap: true,
    icon: (
      <Icon>
        <path d="M6.500 6v6q0 3.500 4 3.500t4-3.500V6" stroke="#e00000" strokeWidth="3" />
        <path d="M6.500 3v3M14.500 3v3" strokeWidth="3" />
      </Icon>
    ),
  },
];

function LeftTools() {
  return (
    <div className="w-[36px] shrink-0 pt-[4px]">
      <div className="flex flex-col border-y border-[#a0a0a0] pt-[7px] pb-[6px] pl-[3px]">
        {LEFT_TOOLS.map((tool) => (
          <ToolButton
            key={tool.label}
            label={tool.label}
            pressed={tool.pressed}
            className={clsx("h-[22px] w-[30px]", tool.gap && "mt-[5px]")}
          >
            {tool.icon}
          </ToolButton>
        ))}
      </div>
    </div>
  );
}

function RightTools() {
  return (
    <div className="w-[31px] shrink-0 pl-[2px]">
      <div className="flex flex-col border-y border-[#a0a0a0] pt-[8px] pb-[6px] pl-[3px]">
        {RIGHT_TOOLS.map((tool) => (
          <ToolButton
            key={tool.label}
            label={tool.label}
            pressed={tool.pressed}
            className={clsx("h-[22px] w-[22px]", tool.gap && "mt-[5px]")}
          >
            {tool.icon}
          </ToolButton>
        ))}
      </div>
    </div>
  );
}

function TitleBar() {
  return (
    <header className="relative flex h-[28px] items-start overflow-hidden border-b border-[#2c3a48] bg-[linear-gradient(90deg,#a9bccd_0,#93aac0_80px,#a9bccb_240px,#8ea5bb_410px,#b4d3f0_440px,#bcdcfa_800px,#b4d6f6_1000px,#b9dafa_1490px,#1d3f60_1506px,#24496c_1640px,#1b3b5a_100%)]">
      <div className="absolute inset-0 bg-[linear-gradient(180deg,rgba(255,255,255,0.2)_0,rgba(255,255,255,0)_60%,rgba(30,60,90,0.35)_100%)]" />
      <div className="absolute top-[9px] left-[485px] flex h-[11px] gap-2 opacity-40 blur-[4px]">
        <span className="w-[56px] bg-[#4a6a8a]" />
        <span className="w-[86px] bg-[#4a6a8a]" />
        <span className="w-[58px] bg-[#4a6a8a]" />
        <span className="w-[108px] bg-[#4a6a8a]" />
      </div>
      <div className="relative flex h-full flex-1 items-center gap-[5px]">
        <svg width="21" height="16" viewBox="0 0 21 16" aria-hidden="true">
          <path d="M0 3h12l2 3 3-3h4l-4 9H0z" fill="#0000e0" />
          <path d="M0 14l4-2 4-5 4 2 5-5 4-1" fill="none" stroke="#e00000" strokeWidth="2" />
        </svg>
        <h1 className="font-['Open_Sans','Noto_Sans',sans-serif] text-[14px] leading-[20px] font-normal whitespace-nowrap text-black">
          Advanced GET for TS2000i - [STOXX50-DT - STOXX FUTURES, 60]
        </h1>
      </div>
      <div className="relative mr-[2px] flex h-[25px] overflow-hidden rounded-b-[5px] border border-t-0 border-[#c4d0dc]">
        <button
          type="button"
          aria-label="Minimize"
          className="flex w-[38px] items-end justify-center border-r border-[#b0bcc8] bg-linear-to-b from-[#8c9cac] from-50% to-[#30465c] to-50% pb-[4px]"
        >
          <span className="h-[5px] w-[17px] border border-[#505a64] bg-white" />
        </button>
        <button
          type="button"
          aria-label="Restore"
          className="flex w-[36px] items-center justify-center border-r border-[#b0bcc8] bg-linear-to-b from-[#8c9cac] from-50% to-[#30465c] to-50%"
        >
          <svg width="20" height="18" viewBox="0 0 20 18" aria-hidden="true">
            <path d="M5.500 1.500h13v12h-13z" fill="#f4f4f4" stroke="#404a54" />
            <path d="M1.500 4.500h13v12h-13z" fill="#f4f4f4" stroke="#404a54" />
            <path d="M5.500 8.500h5v4h-5z" fill="#506478" stroke="#404a54" />
          </svg>
        </button>
        <button
          type="button"
          aria-label="Close"
          className="flex w-[62px] items-center justify-center bg-linear-to-b from-[#d88878] from-50% to-[#b83020] to-50%"
        >
          <svg width="20" height="18" viewBox="0 0 20 18" aria-hidden="true">
            <path d="M4 3l11 12M15 3L4 15" stroke="#50302c" strokeWidth="5" />
            <path d="M4 3l11 12M15 3L4 15" stroke="#fff" strokeWidth="3" />
          </svg>
        </button>
      </div>
    </header>
  );
}

const MENUS = ["File", "Page", "Chart", "Tools", "View", "Window", "Help"];

function MenuBar() {
  return (
    <nav className="flex h-[30px] items-center border-b border-[#a0a0a0] bg-[linear-gradient(180deg,#ffffff_0,#eef0f8_30%,#d5dbec_32%,#e1e6f4_100%)]">
      <div className="flex flex-1 items-center gap-px pl-[6px]">
        <CrossBarIcon />
        {MENUS.map((menu) => (
          <button
            key={menu}
            type="button"
            className="px-[7px] font-['Open_Sans','Noto_Sans',sans-serif] text-[14px] leading-[20px] text-[#101010]"
          >
            <span className="underline underline-offset-2">{menu[0]}</span>
            {menu.slice(1)}
          </button>
        ))}
      </div>
      <div className="flex gap-px pr-px text-[#607890]">
        <button
          type="button"
          aria-label="Minimize chart"
          className="flex h-[27px] w-[23px] items-center justify-center border border-[#a8b8cc] bg-[#dcebfa]"
        >
          <svg width="12" height="12" viewBox="0 0 12 12" aria-hidden="true">
            <path d="M3 9h6" stroke="currentColor" strokeWidth="2" />
          </svg>
        </button>
        <button
          type="button"
          aria-label="Restore chart"
          className="flex h-[27px] w-[23px] items-center justify-center border border-[#a8b8cc] bg-[#dcebfa]"
        >
          <svg width="12" height="12" viewBox="0 0 12 12" fill="none" stroke="currentColor" aria-hidden="true">
            <path d="M4.500 4V2.500h6v5H8M2.500 5.500h5v4h-5zM4 3h6M2 6h6" />
          </svg>
        </button>
        <button
          type="button"
          aria-label="Close chart"
          className="flex h-[27px] w-[23px] items-center justify-center border border-[#a8b8cc] bg-[#dcebfa]"
        >
          <svg width="12" height="12" viewBox="0 0 12 12" aria-hidden="true">
            <path d="M3 3l6 6M9 3L3 9" stroke="currentColor" strokeWidth="2" />
          </svg>
        </button>
      </div>
    </nav>
  );
}

function QuoteBar() {
  return (
    <div className="flex h-[19px] items-center bg-[#0000f8] text-[16px] leading-[19px] font-bold whitespace-nowrap text-white">
      <span className="w-[685px] pl-[6px]">09/25/23</span>
      <span className="w-[24px]">O:</span>
      <span className="w-[108px]">4221.000</span>
      <span className="w-[85px]">4241.000</span>
      <span className="w-[23px] text-[#ff0000]">L:</span>
      <span className="w-[84px]">4185.000</span>
      <span className="w-[24px]">C:</span>
      <span>4188.000</span>
      <span className="ml-auto pr-[6px] text-[#ff0000]">-1.000</span>
    </div>
  );
}

const TABS = ["Osc 5,35", "Osc 24,48", "ADX/DMI 96", "CCI 96"];

function StudyTabs() {
  return (
    <div className="flex h-[20px] bg-[#f0f0f0]">
      <ToolButton label="Previous study" className="w-[20px]">
        <Icon w={8} h={10}>
          <path d="M6 0v10L1 5z" fill="#000" stroke="none" />
        </Icon>
      </ToolButton>
      <ToolButton label="Next study" className="w-[21px]">
        <Icon w={8} h={10}>
          <path d="M2 0v10l5-5z" fill="#000" stroke="none" />
        </Icon>
      </ToolButton>
      <div role="tablist" className="flex pl-[2px]">
        {TABS.map((tab, i) => {
          const active = i === TABS.length - 1;
          return (
            <button
              key={tab}
              type="button"
              role="tab"
              aria-selected={active}
              className={clsx(
                "relative bg-black pr-2 pl-[9px] text-[11px] leading-[14px] whitespace-nowrap [clip-path:polygon(0_0,100%_0,calc(100%-6px)_100%,6px_100%)]",
                i > 0 && "-ml-2",
              )}
            >
              <span
                className={clsx(
                  "absolute inset-x-px top-0 bottom-px [clip-path:polygon(0_0,100%_0,calc(100%-6px)_100%,6px_100%)]",
                  active ? "bg-white" : "bg-[#f0f0f0]",
                )}
              />
              <span className="relative block h-[20px]">{tab}</span>
            </button>
          );
        })}
      </div>
    </div>
  );
}

function Workspace() {
  return (
    <main className="min-w-0 flex-1 border-l border-white">
      <div className="border-t-2 border-l-2 border-[#808080]">
        <QuoteBar />
      </div>
      <div className="h-[4px] border-t border-white" />
      <div className="flex border-t-2 border-l-2 border-[#808080]">
        <PriceChart />
        <PriceAxis />
      </div>
      <div className="h-[4px] border-y border-white" />
      <div className="flex border-t-2 border-l-2 border-[#808080]">
        <div className="min-w-0 flex-1">
          <CciChart />
          <StudyTabs />
        </div>
        <CciAxis />
      </div>
      <div className="h-[4px] border-y border-white" />
      <div className="border-t-2 border-l-2 border-[#808080]">
        <DateAxis />
      </div>
    </main>
  );
}

export default function App() {
  return (
    <div className="flex min-h-screen flex-col bg-[#f0f0f0] font-['Liberation_Sans',Arial,sans-serif] text-black">
      <TitleBar />
      <MenuBar />
      <div className="border-t border-white">
        <Toolbar />
      </div>
      <div className="flex border-t border-[#a0a0a0]">
        <LeftTools />
        <Workspace />
        <RightTools />
      </div>
      <footer className="flex flex-1 justify-end border-t border-[#a0a0a0] pt-[4px]">
        <p className="h-[19px] w-[486px] border-t border-l border-[#a0a0a0] pl-[2px] font-['Open_Sans','Noto_Sans',sans-serif] text-[14px] leading-[19px]">
          Page: 2 - STOXX B
        </p>
      </footer>
      <div className="h-[2px] bg-[#9fb0c4]" />
    </div>
  );
}
